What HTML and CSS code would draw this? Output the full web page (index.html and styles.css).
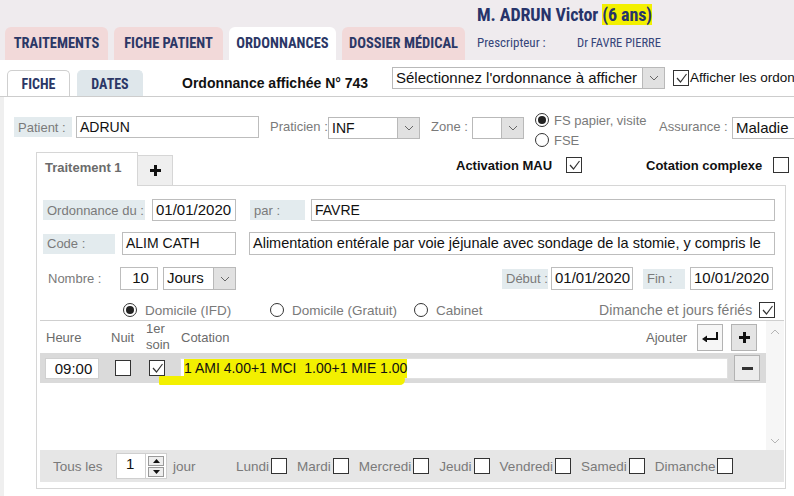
FILE: index.html
```html
<!DOCTYPE html>
<html lang="fr">
<head>
    <meta charset="UTF-8">
    <title>Ordonnances</title>
    <link rel="stylesheet" href="styles.css">
</head>
<body>
    <header class="topbar">
        <nav class="main-tabs">
            <a href="#" class="main-tab tab-traitements">TRAITEMENTS</a>
            <a href="#" class="main-tab tab-fiche">FICHE PATIENT</a>
            <a href="#" class="main-tab tab-ordo active">ORDONNANCES</a>
            <a href="#" class="main-tab tab-dossier">DOSSIER MÉDICAL</a>
        </nav>
        <div class="patient-head">
            <div class="patient-name">M. ADRUN Victor <span class="marker">(6 ans)</span></div>
            <div class="prescriber">
                <span class="prescriber-label">Prescripteur :</span>
                <span class="prescriber-name">Dr FAVRE PIERRE</span>
            </div>
        </div>
    </header>

    <div class="sub-bar">
        <a href="#" class="sub-tab active">FICHE</a>
        <a href="#" class="sub-tab dates">DATES</a>
        <div class="ordo-title">Ordonnance affichée N° 743</div>
        <div class="select ordo-select">
            <span class="select-value">Sélectionnez l'ordonnance à afficher</span>
            <span class="select-btn"><svg width="10" height="6" viewBox="0 0 10 6"><polyline points="1,1 5,5 9,1" fill="none" stroke="#666" stroke-width="1"/></svg></span>
        </div>
        <span class="check checked show-all"><svg width="13" height="13" viewBox="0 0 13 13"><polyline points="2,6 5.5,10 11.5,2" fill="none" stroke="#333" stroke-width="1.2"/></svg></span>
        <span class="show-all-text">Afficher les ordon</span>
    </div>

    <div class="fiche">
        <div class="patient-row">
            <span class="label lbl-patient">Patient :</span>
            <div class="input inp-patient">ADRUN</div>
            <span class="plain lbl-praticien">Praticien :</span>
            <div class="select sel-praticien">
                <span class="select-value">INF</span>
                <span class="select-btn"><svg width="10" height="6" viewBox="0 0 10 6"><polyline points="1,1 5,5 9,1" fill="none" stroke="#666" stroke-width="1"/></svg></span>
            </div>
            <span class="plain lbl-zone">Zone :</span>
            <div class="select sel-zone">
                <span class="select-value"></span>
                <span class="select-btn"><svg width="10" height="6" viewBox="0 0 10 6"><polyline points="1,1 5,5 9,1" fill="none" stroke="#666" stroke-width="1"/></svg></span>
            </div>
            <div class="fs-group">
                <label class="radio-line"><span class="radio checked"></span>FS papier, visite</label>
                <label class="radio-line"><span class="radio"></span>FSE</label>
            </div>
            <span class="plain lbl-assurance">Assurance :</span>
            <div class="input inp-assurance">Maladie</div>
        </div>

        <div class="treat-head">
            <div class="treat-tab">Traitement 1</div>
            <div class="treat-add">
                <svg width="11" height="11" viewBox="0 0 11 11"><path d="M4 0h3v4h4v3H7v4H4V7H0V4h4z" fill="#111"/></svg>
            </div>
            <span class="opt-label opt-mau">Activation MAU</span>
            <span class="check checked"><svg width="13" height="13" viewBox="0 0 13 13"><polyline points="2,6 5.5,10 11.5,2" fill="none" stroke="#333" stroke-width="1.2"/></svg></span>
            <span class="opt-label opt-complexe">Cotation complexe</span>
            <span class="check"></span>
        </div>

        <section class="treat-panel">
            <div class="form-row row-ordo">
                <span class="label lbl-ordo">Ordonnance du :</span>
                <div class="input inp-date">01/01/2020</div>
                <span class="label lbl-par">par :</span>
                <div class="input inp-par">FAVRE</div>
            </div>
            <div class="form-row row-code">
                <span class="label lbl-code">Code :</span>
                <div class="input inp-code">ALIM CATH</div>
                <div class="input inp-libelle">Alimentation entérale par voie jéjunale avec sondage de la stomie, y compris le</div>
            </div>
            <div class="form-row row-nombre">
                <span class="plain lbl-nombre">Nombre :</span>
                <div class="input inp-nombre">10</div>
                <div class="select sel-jours">
                    <span class="select-value">Jours</span>
                    <span class="select-btn"><svg width="10" height="6" viewBox="0 0 10 6"><polyline points="1,1 5,5 9,1" fill="none" stroke="#666" stroke-width="1"/></svg></span>
                </div>
                <span class="label lbl-debut">Début :</span>
                <div class="input inp-date2">01/01/2020</div>
                <span class="label lbl-fin">Fin :</span>
                <div class="input inp-date3">10/01/2020</div>
            </div>
            <div class="form-row row-lieu">
                <label class="radio-line lieu-ifd"><span class="radio checked"></span>Domicile (IFD)</label>
                <label class="radio-line lieu-gratuit"><span class="radio"></span>Domicile (Gratuit)</label>
                <label class="radio-line lieu-cabinet"><span class="radio"></span>Cabinet</label>
                <span class="plain lbl-dimanche">Dimanche et jours fériés</span>
                <span class="check checked"><svg width="13" height="13" viewBox="0 0 13 13"><polyline points="2,6 5.5,10 11.5,2" fill="none" stroke="#333" stroke-width="1.2"/></svg></span>
            </div>

            <div class="soins">
                <div class="soins-main">
                    <div class="soins-head">
                        <span class="col-heure">Heure</span>
                        <span class="col-nuit">Nuit</span>
                        <span class="col-soin">1er<br>soin</span>
                        <span class="col-cotation">Cotation</span>
                        <span class="ajouter">Ajouter</span>
                        <button class="sq-btn btn-return"><svg width="18" height="10" viewBox="0 0 18 10"><path d="M16 0v7H5" fill="none" stroke="#111" stroke-width="2"/><path d="M1 7l5-3.5v7z" fill="#111"/></svg></button>
                        <button class="sq-btn btn-plus"><svg width="11" height="11" viewBox="0 0 11 11"><path d="M4 0h3v4h4v3H7v4H4V7H0V4h4z" fill="#111"/></svg></button>
                    </div>
                    <div class="soin-row">
                        <div class="input inp-heure">09:00</div>
                        <span class="check nuit-check"></span>
                        <span class="check checked soin-check"><svg width="13" height="13" viewBox="0 0 13 13"><polyline points="2,6 5.5,10 11.5,2" fill="none" stroke="#333" stroke-width="1.2"/></svg></span>
                        <div class="input inp-cotation"><span class="marker cot-marker">1 AMI 4.00+1 MCI&nbsp; 1.00+1 MIE 1.00</span></div>
                        <button class="sq-btn btn-minus"><svg width="11" height="3" viewBox="0 0 11 3"><rect width="11" height="3" fill="#333"/></svg></button>
                    </div>
                </div>
                <div class="scrollbar">
                    <svg width="10" height="6" viewBox="0 0 10 6"><polyline points="1,5 5,1 9,5" fill="none" stroke="#b5b5b5" stroke-width="1"/></svg>
                    <svg width="10" height="6" viewBox="0 0 10 6"><polyline points="1,1 5,5 9,1" fill="none" stroke="#b5b5b5" stroke-width="1"/></svg>
                </div>
            </div>

            <div class="repeat-bar">
                <span class="plain lbl-tous">Tous les</span>
                <div class="input inp-freq">1</div>
                <div class="spinner">
                    <span class="spin-btn"><svg width="7" height="4" viewBox="0 0 7 4"><path d="M0 4L3.5 0 7 4z" fill="#111"/></svg></span>
                    <span class="spin-btn"><svg width="7" height="4" viewBox="0 0 7 4"><path d="M0 0h7L3.5 4z" fill="#111"/></svg></span>
                </div>
                <span class="plain lbl-jour">jour</span>
                <div class="days">
                    <span class="day">Lundi<span class="check"></span></span>
                    <span class="day">Mardi<span class="check"></span></span>
                    <span class="day">Mercredi<span class="check"></span></span>
                    <span class="day">Jeudi<span class="check"></span></span>
                    <span class="day">Vendredi<span class="check"></span></span>
                    <span class="day">Samedi<span class="check"></span></span>
                    <span class="day">Dimanche<span class="check"></span></span>
                </div>
            </div>
        </section>
    </div>
</body>
</html>
```

FILE: styles.css
```css
* {
    margin: 0;
    padding: 0;
    box-sizing: border-box;
}

body {
    width: 794px;
    height: 496px;
    overflow: hidden;
    background: #ffffff;
    font-family: "Liberation Sans", Arial, sans-serif;
    font-size: 13px;
    color: #222;
}

.main-tabs > *,
.sub-bar > *,
.patient-row > *,
.treat-head > *,
.form-row > *,
.soins-head > *,
.soin-row > *,
.repeat-bar > * {
    flex-shrink: 0;
}

/* top bar */

.topbar {
    height: 60px;
    background: #efebee;
    display: flex;
    padding-left: 5px;
}

.main-tabs {
    display: flex;
    align-items: flex-end;
    gap: 6px;
    flex-shrink: 0;
}

.main-tab {
    height: 33px;
    display: flex;
    align-items: center;
    justify-content: center;
    background: #f2d9d9;
    border-radius: 6px 6px 0 0;
    color: #2b3766;
    font-family: "Liberation Sans Narrow", "Roboto Condensed", Roboto, sans-serif;
    font-weight: 700;
    font-size: 14.5px;
    white-space: nowrap;
    text-decoration: none;
}

.main-tab.active {
    background: #ffffff;
}

.tab-traitements { width: 103px; }
.tab-fiche { width: 109px; }
.tab-ordo { width: 107px; }
.tab-dossier { width: 123px; }

.patient-head {
    flex-shrink: 0;
    margin-left: 12px;
    color: #27346a;
    font-family: "Liberation Sans Narrow", "Roboto Condensed", Roboto, sans-serif;
    white-space: nowrap;
}

.patient-name {
    margin-top: 3px;
    font-size: 18px;
    font-weight: 700;
    line-height: 24px;
    letter-spacing: -0.1px;
}

.marker {
    background: #f3f000;
}

.prescriber {
    margin-top: 8px;
    font-size: 13px;
    display: flex;
    color: #35457a;
}

.prescriber-label {
    width: 100px;
}

.prescriber-name {
    font-size: 12.5px;
}

/* sub tabs */

.sub-bar {
    height: 37px;
    display: flex;
    align-items: flex-end;
    padding-left: 7px;
    border-bottom: 1px solid #cdcdcd;
    overflow: hidden;
}

.sub-tab {
    height: 27px;
    display: flex;
    align-items: center;
    justify-content: center;
    width: 63px;
    margin-bottom: -1px;
    background: #ffffff;
    border: 1px solid #cfcfcf;
    border-bottom: none;
    border-radius: 5px 5px 0 0;
    color: #2b3766;
    font-family: "Liberation Sans Narrow", "Roboto Condensed", Roboto, sans-serif;
    font-weight: 700;
    font-size: 14px;
    text-decoration: none;
}

.sub-tab.dates {
    width: 66px;
    margin-left: 7px;
    background: #dfe7eb;
    border-color: #dfe7eb;
}

.ordo-title {
    margin-left: 39px;
    margin-bottom: 4px;
    font-weight: 700;
    font-size: 14px;
    line-height: 18px;
    color: #111;
    width: 210px;
}

.select {
    flex: none;
    display: flex;
    height: 22px;
    border: 1px solid #b9b9b9;
    background: #fff;
}

.select-value {
    flex: 1;
    padding-left: 3px;
    font-size: 14px;
    line-height: 20px;
    color: #111;
    white-space: nowrap;
    overflow: hidden;
}

.select-btn {
    width: 22px;
    display: flex;
    align-items: center;
    justify-content: center;
    background: #e1e1e1;
    border-left: 1px solid #b9b9b9;
}

.ordo-select {
    width: 273px;
    margin-bottom: 7px;
}

.ordo-select .select-value {
    font-size: 15px;
}

.check {
    flex: none;
    width: 16px;
    height: 16px;
    border: 1px solid #333;
    background: #fff;
    display: inline-flex;
    align-items: center;
    justify-content: center;
}

.show-all {
    margin-left: 8px;
    margin-bottom: 10px;
}

.show-all-text {
    margin-left: 1px;
    margin-bottom: 10px;
    font-size: 13.5px;
    line-height: 17px;
    white-space: nowrap;
    color: #111;
}

/* fiche */

.fiche {
    border-left: 4px solid #efefef;
    height: 399px;
    padding-top: 16px;
}

.patient-row {
    display: flex;
    align-items: flex-start;
    height: 34px;
    padding-left: 10px;
}

.label {
    flex: none;
    height: 20px;
    display: flex;
    align-items: center;
    padding-left: 4px;
    background: #e3ebee;
    color: #7a7a7a;
    font-size: 13px;
    white-space: nowrap;
}

.plain {
    flex: none;
    color: #7a7a7a;
    font-size: 13px;
    white-space: nowrap;
}

.input {
    flex: none;
    height: 22px;
    border: 1px solid #bdbdbd;
    background: #fff;
    padding-left: 3px;
    font-size: 14px;
    line-height: 20px;
    color: #111;
    white-space: nowrap;
    overflow: hidden;
}

.lbl-patient {
    width: 58px;
    margin-top: 4px;
}

.inp-patient {
    width: 183px;
    margin: 3px 0 0 4px;
}

.lbl-praticien {
    width: 58px;
    margin: 6px 0 0 11px;
}

.sel-praticien {
    width: 92px;
    margin-top: 4px;
}

.lbl-zone {
    width: 41px;
    margin: 6px 0 0 11px;
}

.sel-zone {
    width: 52px;
    margin-top: 4px;
}

.fs-group {
    width: 124px;
    margin-left: 11px;
    display: flex;
    flex-direction: column;
    gap: 6px;
}

.radio-line {
    display: flex;
    align-items: center;
    gap: 5px;
    color: #7a7a7a;
    font-size: 13px;
    white-space: nowrap;
    height: 14px;
}

.radio {
    flex: none;
    width: 14px;
    height: 14px;
    border: 1px solid #333;
    border-radius: 50%;
    display: flex;
    align-items: center;
    justify-content: center;
    background: #fff;
}

.radio.checked::after {
    content: "";
    width: 8px;
    height: 8px;
    border-radius: 50%;
    background: #222;
}

.lbl-assurance {
    width: 73px;
    margin-top: 6px;
}

.inp-assurance {
    width: 80px;
    margin-top: 4px;
    font-size: 15px;
}

/* traitement tabs */

.treat-head {
    display: flex;
    align-items: flex-end;
    height: 33px;
    padding-left: 32px;
    margin-top: 5px;
}

.treat-tab {
    width: 102px;
    height: 34px;
    margin-bottom: -1px;
    background: #fff;
    border: 1px solid #d6d6d6;
    border-bottom: none;
    padding: 7px 0 0 8px;
    color: #6b6b6b;
    font-weight: 700;
    font-size: 13px;
}

.treat-add {
    width: 35px;
    height: 30px;
    background: #efefef;
    border: 1px solid #d6d6d6;
    border-bottom: none;
    border-left: none;
    display: flex;
    align-items: center;
    justify-content: center;
}

.opt-label {
    align-self: flex-start;
    margin-top: 6px;
    font-weight: 700;
    font-size: 13px;
    color: #111;
    white-space: nowrap;
}

.opt-mau {
    margin-left: 283px;
    width: 110px;
}

.treat-head .check {
    align-self: flex-start;
    margin-top: 5px;
}

.opt-complexe {
    margin-left: 64px;
    width: 127px;
}

.treat-panel {
    margin-left: 32px;
    width: 750px;
    height: 304px;
    border: 1px solid #d6d6d6;
    padding: 13px 0 0 0;
    display: flex;
    flex-direction: column;
}

.form-row {
    display: flex;
    align-items: center;
    padding-left: 6px;
}

.row-ordo {
    height: 22px;
}

.lbl-ordo {
    width: 102px;
}

.inp-date {
    width: 84px;
    margin-left: 7px;
    font-size: 15px;
}

.lbl-par {
    width: 55px;
    margin-left: 14px;
}

.inp-par {
    width: 464px;
    margin-left: 6px;
}

.row-code {
    height: 23px;
    margin-top: 11px;
}

.lbl-code {
    width: 72px;
}

.inp-code {
    width: 114px;
    margin-left: 7px;
    height: 23px;
}

.inp-libelle {
    width: 526px;
    margin-left: 13px;
    height: 23px;
    font-size: 14.5px;
}

.row-nombre {
    height: 23px;
    margin-top: 12px;
}

.lbl-nombre {
    width: 77px;
    padding-left: 5px;
}

.inp-nombre {
    width: 38px;
    height: 23px;
    text-align: center;
    font-size: 15px;
}

.sel-jours {
    width: 73px;
    height: 23px;
    margin-left: 5px;
}

.sel-jours .select-value {
    font-size: 15px;
}

.lbl-debut {
    width: 46px;
    margin-left: 266px;
}

.inp-date2 {
    width: 82px;
    margin-left: 3px;
    height: 23px;
    font-size: 15px;
}

.lbl-fin {
    width: 42px;
    margin-left: 10px;
}

.inp-date3 {
    width: 83px;
    margin-left: 5px;
    height: 23px;
    text-align: right;
    padding-right: 3px;
    font-size: 15px;
}

.row-lieu {
    height: 20px;
    margin-top: 10px;
    padding-left: 86px;
}

.row-lieu .radio-line {
    gap: 8px;
    font-size: 13.5px;
}

.lieu-ifd {
    width: 147px;
}

.lieu-gratuit {
    width: 144px;
}

.lieu-cabinet {
    width: 185px;
}

.lbl-dimanche {
    width: 160px;
    font-size: 14px;
    letter-spacing: 0.1px;
}

/* soins list */

.soins {
    margin: 0 1px 0 3px;
    height: 130px;
    border-top: 1px solid #cfcfcf;
    display: flex;
}

.soins-main {
    flex: 1;
}

.soins-head {
    height: 32px;
    display: flex;
    align-items: center;
    color: #6b6b6b;
    font-size: 13px;
}

.col-heure {
    width: 64px;
    padding-left: 6px;
}

.col-nuit {
    width: 38px;
    padding-left: 7px;
}

.col-soin {
    width: 35px;
    padding-left: 4px;
    line-height: 16px;
    margin-top: -1px;
}

.col-cotation {
    width: 469px;
    padding-left: 4px;
}

.ajouter {
    width: 51px;
}

.sq-btn {
    width: 26px;
    height: 27px;
    border: 1px solid #b3b3b3;
    background: #f6f6f6;
    display: flex;
    align-items: center;
    justify-content: center;
}

.btn-plus {
    margin-left: 8px;
    background: #e4e4e4;
}

.soin-row {
    height: 30px;
    background: #dadada;
    display: flex;
    align-items: center;
}

.inp-heure {
    width: 54px;
    height: 21px;
    margin-left: 5px;
    text-align: center;
    font-size: 15px;
    line-height: 19px;
    border-color: #d0d0d0;
}

.nuit-check {
    margin-left: 16px;
}

.soin-check {
    margin-left: 18px;
}

.inp-cotation {
    width: 548px;
    height: 21px;
    margin-left: 15px;
    overflow: visible;
    line-height: 19px;
    border-color: #e0e0e0;
    position: relative;
    z-index: 0;
}

.cot-marker {
    padding: 1px 0 2px 0;
}

.cot-marker::after {
    content: "";
    position: absolute;
    left: -22px;
    top: 17px;
    width: 246px;
    height: 9px;
    background: #f3f000;
    border-radius: 2px 6px 8px 2px;
    z-index: -1;
}

.btn-minus {
    margin-left: 6px;
    height: 26px;
    background: #ececec;
}

.scrollbar {
    width: 18px;
    background: #f6f6f6;
    display: flex;
    flex-direction: column;
    align-items: center;
    justify-content: space-between;
    padding: 8px 0 6px 0;
}

/* repeat bar */

.repeat-bar {
    margin: 0 1px 0 3px;
    height: 32px;
    background: #e6e6e6;
    display: flex;
    align-items: center;
}

.lbl-tous {
    width: 76px;
    padding-left: 13px;
    font-size: 13.5px;
}

.inp-freq {
    width: 30px;
    height: 26px;
    padding-left: 9px;
    font-size: 15px;
    line-height: 20px;
    border-color: #cfcfcf;
}

.spinner {
    width: 21px;
    height: 26px;
    border: 1px solid #cfcfcf;
    border-left: none;
    background: #fff;
    display: flex;
    flex-direction: column;
    justify-content: center;
    gap: 1px;
    padding: 0 2px;
}

.spin-btn {
    height: 10px;
    border: 1px solid #9a9a9a;
    background: #eee;
    display: flex;
    align-items: center;
    justify-content: center;
}

.lbl-jour {
    width: 69px;
    padding-left: 6px;
    font-size: 13.5px;
}

.days {
    display: flex;
    gap: 10px;
}

.day {
    display: flex;
    align-items: center;
    gap: 2px;
    color: #7a7a7a;
    font-size: 13.5px;
}
```
